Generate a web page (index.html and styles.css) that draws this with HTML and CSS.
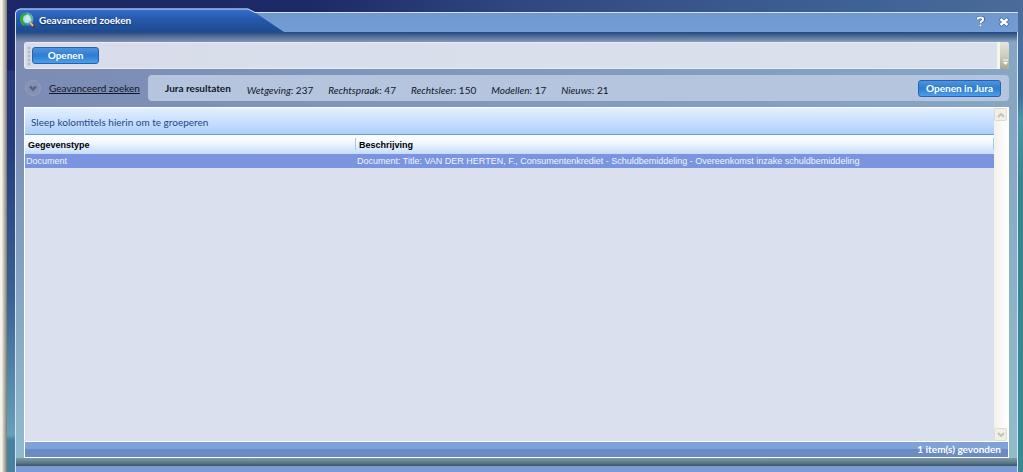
FILE: index.html
```html
<!DOCTYPE html>
<html lang="nl">
<head>
<meta charset="utf-8">
<title>Geavanceerd zoeken</title>
<link rel="stylesheet" href="styles.css">
</head>
<body>
<div class="desktop">
  <main class="window">
    <header class="titlebar">
      <svg class="tab" width="270" height="24" viewBox="0 0 270 24" aria-hidden="true">
        <defs>
          <linearGradient id="tabfill" x1="0" y1="0" x2="0" y2="1">
            <stop offset="0" stop-color="#3970cf"/>
            <stop offset=".45" stop-color="#2559ad"/>
            <stop offset="1" stop-color="#1f4b8e"/>
          </linearGradient>
        </defs>
        <path d="M0 24V4Q1 1 5 .5H233L240 4.500L269 24Z" fill="url(#tabfill)"/>
        <path d="M.5 24V5Q1 1.500 5 1H233L240 4.500H270" fill="none" stroke="#d3e2fa"/>
      </svg>
      <div class="title">
        <svg width="17" height="17" viewBox="0 0 17 17" aria-hidden="true">
          <defs>
            <radialGradient id="globe" cx=".6" cy=".4" r=".6">
              <stop offset="0" stop-color="#d8f0fa"/>
              <stop offset=".5" stop-color="#74b6d8"/>
              <stop offset="1" stop-color="#1763a5"/>
            </radialGradient>
          </defs>
          <circle cx="7.500" cy="7.500" r="7" fill="url(#globe)"/>
          <path d="M2 3Q5 0 8 1L7 4L5 6L6 9L5 14Q0 11 1 6Z" fill="#35a83c"/>
          <path d="M9 1Q13 3 14 8L11 6Z" fill="#4cb65a"/>
          <circle cx="8" cy="7" r="4" fill="#c5edf0" fill-opacity=".8"/>
          <path d="M11 10.500L15 15.500" stroke="#48391f" stroke-width="2.500"/>
          <path d="M11 10.500L14 14" stroke="#e4bd70" stroke-width="2"/>
        </svg>
        <h1>Geavanceerd zoeken</h1>
      </div>
      <div class="window-actions">
        <button type="button" aria-label="Help">
          <svg width="9" height="11" viewBox="0 0 9 11"><path d="M1.500 3.500Q1.500 1.500 4.500 1.500Q7.500 1.500 7.500 3.300Q7.500 4.500 5.500 5.300Q4.500 5.800 4.500 7.200M4.500 8.500V10.700" fill="none" stroke="#34568f" stroke-width="3"/><path d="M1.500 3.500Q1.500 1.500 4.500 1.500Q7.200 1.500 7.200 3.300Q7.200 4.500 5.500 5.300Q4.500 5.800 4.500 7.200M4.500 8.500V10.500" fill="none" stroke="#fff" stroke-width="2"/></svg>
        </button>
        <button type="button" aria-label="Sluiten">
          <svg width="10" height="10" viewBox="0 0 10 10"><path d="M1 1.500L9 8.500M9 1.500L1 8.500" stroke="#34568f" stroke-width="3.600"/><path d="M1.500 2L8.500 8M8.500 2L1.500 8" stroke="#fff" stroke-width="2.600"/></svg>
        </button>
      </div>
    </header>

    <div class="content">
      <div class="toolbar">
        <span class="grip"></span>
        <button type="button" class="action open">Openen</button>
        <button type="button" class="overflow" aria-label="Meer knoppen">
          <svg width="7" height="7" viewBox="0 0 7 7"><path d="M1 1H6" stroke="#fff"/><path d="M1 3H6L3.500 6Z" fill="#fff"/></svg>
        </button>
      </div>

      <div class="search-row">
        <a class="advanced" href="#">
          <svg width="16" height="16" viewBox="0 0 16 16" aria-hidden="true"><circle cx="8" cy="8" r="7.500" fill="#8491b0" stroke="#919ebc"/><path d="M5 6.500L8 9.500L11 6.500" fill="none" stroke="#56658a" stroke-width="2.500"/></svg>
          <span>Geavanceerd zoeken</span>
        </a>
        <section class="results">
          <h2>Jura resultaten</h2>
          <ul>
            <li><em>Wetgeving</em>: 237</li>
            <li><em>Rechtspraak</em>: 47</li>
            <li><em>Rechtsleer</em>: 150</li>
            <li><em>Modellen</em>: 17</li>
            <li><em>Nieuws</em>: 21</li>
          </ul>
          <button type="button" class="action jura">Openen in Jura</button>
        </section>
      </div>

      <section class="grid">
        <div class="grid-view">
          <div class="grid-main">
            <div class="group-hint">Sleep kolomtitels hierin om te groeperen</div>
            <table>
              <thead><tr><th class="type" scope="col">Gegevenstype</th><th scope="col">Beschrijving</th></tr></thead>
              <tbody><tr><td>Document</td><td>Document: Title: VAN DER HERTEN, F., Consumentenkrediet - Schuldbemiddeling - Overeenkomst inzake schuldbemiddeling</td></tr></tbody>
            </table>
          </div>
          <div class="scrollbar">
            <button type="button" aria-label="Omhoog"><svg width="8" height="6" viewBox="0 0 8 6"><path d="M1 5L4 2L7 5" fill="none" stroke="#c5c4ba" stroke-width="2"/></svg></button>
            <button type="button" aria-label="Omlaag"><svg width="8" height="6" viewBox="0 0 8 6"><path d="M1 1L4 4L7 1" fill="none" stroke="#c5c4ba" stroke-width="2"/></svg></button>
          </div>
        </div>
        <footer class="status">1 item(s) gevonden</footer>
      </section>
    </div>
    <div class="bottom-bar"></div>
  </main>
</div>
</body>
</html>
```

FILE: styles.css
```css
* { box-sizing: border-box; }

body {
  margin: 0;
  font-family: Lato, "Liberation Sans", sans-serif;
  font-size: 10px;
  color: #101828;
}

h1, h2, ul { margin: 0; padding: 0; font-size: 10px; }

button {
  margin: 0;
  padding: 0;
  border: 0;
  background: none;
  font: inherit;
}

svg { display: block; }

.desktop {
  display: flex;
  min-height: 100vh;
  padding: 8px 5px 0 8px;
  border-left: 7px solid;
  border-image: linear-gradient(90deg, #f4f2ea 2px, #d4d0c4 3px, #aaa79d 5px, #77786f 7px) 0 0 0 7;
  background:
    linear-gradient(180deg, #4b6b9c 0, #42719c 95px, #4a93a4 120px, #3b848f 180px, #398892 100%) right / 5px 100% no-repeat,
    linear-gradient(180deg, #1c2868 0, #1c2868 70px, #253778 71px, #263b7c 140px, #396395 300px, #67a0b8 435px, #4682a1 440px, #4b809f 100%) left / 8px 100% no-repeat,
    linear-gradient(90deg, #1b2865 0, #1d2a68 30%, #30477f 50%, #385488 65%, #3d6394 85%, #4b6b9c 100%);
}

.window {
  display: flex;
  flex: 1;
  flex-direction: column;
  min-width: 0;
}

.titlebar {
  position: relative;
  display: flex;
  align-items: center;
  justify-content: space-between;
  height: 24px;
  padding: 0 9px 0 4px;
  background: linear-gradient(180deg, transparent 4px, #d3e2fa 4px, #d3e2fa 5px, #7098cd 5px, #729dd5 100%);
}

.tab {
  position: absolute;
  top: 0;
  left: 0;
}

.title {
  position: relative;
  display: flex;
  align-items: center;
  gap: 3px;
  color: #fff;
}

.title h1 { font-weight: 700; text-shadow: 0 1px 1px #173563; }

.window-actions {
  display: flex;
  align-items: center;
  gap: 14px;
  padding-top: 3px;
}

.content {
  display: flex;
  flex: 1;
  flex-direction: column;
  gap: 6px;
  padding: 10px 8px 8px;
  border: solid #d3e2fa;
  border-width: 0 1px;
  background:
    linear-gradient(180deg, #1f4a87 0, #36598a 2px, #5b7197 5px, rgba(110, 132, 170, 0) 10px) top / 100% 10px no-repeat,
    linear-gradient(180deg, #7f99a9, #5b7785 5px, #3b5268) bottom / 100% 8px no-repeat,
    linear-gradient(180deg, transparent 80px, rgba(146, 190, 205, .9) 410px),
    linear-gradient(90deg, #7c8cb5, #7f94b9 30%, #86a6c4);
}

.toolbar {
  display: flex;
  align-items: center;
  height: 27px;
  padding-left: 2px;
  border: 1px solid #e5edf5;
  border-right: 0;
  border-radius: 3px;
  background: linear-gradient(90deg, #d9dcea, #d8e0ec 50%, #d9e1ed);
}

.grip {
  width: 5px;
  height: 20px;
  background: radial-gradient(circle at 2px 2px, #b8bdca 1px, transparent 2px) 0 0 / 4px 4px repeat-y;
}

.action {
  height: 17px;
  border: 1px solid #2463b1;
  border-radius: 3px;
  background: linear-gradient(180deg, #4a96e2, #357dcc 45%, #2f80d5 55%, #4ba0e9);
  color: #fff;
  font-weight: 700;
  line-height: 15px;
}

.open { width: 67px; }

.overflow {
  display: flex;
  align-items: flex-end;
  justify-content: center;
  width: 12px;
  height: 27px;
  margin-left: auto;
  padding: 0 0 3px 1px;
  border-left: 3px solid #f6f6f1;
  border-radius: 0 3px 3px 0;
  background: linear-gradient(180deg, #e5e5df, #cfcdbd 50%, #aaa78e);
}

.search-row {
  display: flex;
  height: 26px;
}

.advanced {
  display: flex;
  flex: 0 0 124px;
  align-items: center;
  gap: 8px;
  padding-left: 1px;
  color: #101828;
  text-decoration: none;
  white-space: nowrap;
}

.advanced span { text-decoration: underline; }

.results {
  display: flex;
  flex: 1;
  align-items: center;
  gap: 16px;
  padding: 0 8px 0 17px;
  border-radius: 4px;
  background: #b5c5dd;
  white-space: nowrap;
}

.results ul {
  display: flex;
  gap: 15px;
  padding-top: 3px;
  list-style: none;
}

.jura { width: 83px; margin-left: auto; }

.grid {
  display: flex;
  flex: 1;
  flex-direction: column;
  border: 1px solid #fff;
  background: #dbe0ef;
}

.grid-view {
  display: flex;
  flex: 1;
}

.grid-main { flex: 1; }

.group-hint {
  height: 27px;
  padding-left: 6px;
  border-bottom: 1px solid #6f9bce;
  background: linear-gradient(180deg, #e3f0ff, #add0fb);
  color: #24478a;
  line-height: 28px;
}

table {
  width: 100%;
  border-collapse: collapse;
  table-layout: fixed;
  font-family: "Liberation Sans", Arial, sans-serif;
  font-size: 9px;
  text-align: left;
  white-space: nowrap;
}

thead { background: linear-gradient(180deg, #fff, #edf5ff 45%, #c6dcfb); }

th {
  height: 19px;
  padding: 0 3px;
  background: linear-gradient(#a4c9ea, #a4c9ea) right 3px / 1px 12px no-repeat;
  color: #000;
}

.type { width: 331px; }

td {
  height: 14px;
  padding: 0 1px;
  overflow: hidden;
  background: #7b94df;
  color: #f2f5ff;
}

.scrollbar {
  display: flex;
  flex: 0 0 14px;
  flex-direction: column;
  justify-content: space-between;
  background: linear-gradient(90deg, #f3f1eb, #fff);
}

.scrollbar button {
  display: flex;
  align-items: center;
  justify-content: center;
  width: 13px;
  height: 13px;
  border: 1px solid #dddbd2;
  border-radius: 2px;
  background: #f1efe7;
}

.status {
  height: 16px;
  padding-right: 7px;
  border-top: 1px solid #fff;
  background: linear-gradient(180deg, #7fa3d7 50%, #6b8bc5 50%);
  color: #fff;
  font-weight: 700;
  line-height: 15px;
  text-align: right;
}

.bottom-bar {
  height: 6px;
  border: solid #d3e2fa;
  border-width: 0 1px;
  background: #789cd3;
}
```
